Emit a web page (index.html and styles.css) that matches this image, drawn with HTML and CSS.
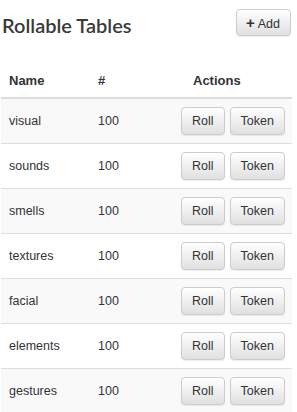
FILE: index.html
```html
<!DOCTYPE html>
<html lang="en">
<head>
	<meta charset="UTF-8">
	<title>Rollable Tables</title>
	<link rel="stylesheet" href="styles.css">
</head>
<body>
	<div class="page">
		<div class="page_head">
			<h2 class="title">Rollable Tables</h2>
			<button class="btn btn_add"><span class="plus">+</span>Add</button>
		</div>
		<table class="tbl">
			<thead>
				<tr>
					<th class="col_name">Name</th>
					<th class="col_num">#</th>
					<th class="col_act">Actions</th>
				</tr>
			</thead>
			<tbody>
				<tr><td>visual</td><td>100</td><td><div class="acts"><button class="btn">Roll</button><button class="btn">Token</button></div></td></tr>
				<tr><td>sounds</td><td>100</td><td><div class="acts"><button class="btn">Roll</button><button class="btn">Token</button></div></td></tr>
				<tr><td>smells</td><td>100</td><td><div class="acts"><button class="btn">Roll</button><button class="btn">Token</button></div></td></tr>
				<tr><td>textures</td><td>100</td><td><div class="acts"><button class="btn">Roll</button><button class="btn">Token</button></div></td></tr>
				<tr><td>facial</td><td>100</td><td><div class="acts"><button class="btn">Roll</button><button class="btn">Token</button></div></td></tr>
				<tr><td>elements</td><td>100</td><td><div class="acts"><button class="btn">Roll</button><button class="btn">Token</button></div></td></tr>
				<tr><td>gestures</td><td>100</td><td><div class="acts"><button class="btn">Roll</button><button class="btn">Token</button></div></td></tr>
			</tbody>
		</table>
	</div>
</body>
</html>
```

FILE: styles.css
```css
body{margin:0;background:#fff;color:#333;font-family:"Liberation Sans",Arial,sans-serif;font-size:12.5px;}
.page{padding:0 5px 0 1px;}
.page_head{display:flex;justify-content:space-between;align-items:flex-start;padding-top:9px;height:55px;}
.title{margin:4px 0 0 1px;font-family:Lato,"Open Sans",sans-serif;font-size:20px;font-weight:600;color:#3a3a3a;line-height:24px;}
.btn{display:inline-block;height:28px;padding:0 10px;font-family:inherit;font-size:12.5px;color:#333;background:linear-gradient(#fff,#e0e0e0);border:1px solid #ccc;border-radius:4px;box-shadow:inset 0 1px 0 rgba(255,255,255,.15),0 1px 1px rgba(0,0,0,.075);cursor:pointer;}
.btn_add{height:27px;padding:0 10px 0 9px;margin-right:1px;}
.plus{font-weight:700;font-size:15px;margin-right:3px;}
.tbl{width:100%;border-collapse:collapse;table-layout:fixed;}
.tbl th{height:33px;padding:0 8px;text-align:left;font-weight:700;font-size:13px;border-bottom:2px solid #ddd;vertical-align:middle;}
.tbl td{padding:8px;border-bottom:1px solid #ddd;vertical-align:middle;}
.tbl tbody tr:nth-child(odd){background:#f9f9f9;}
.col_name{width:73px;}
.col_num{width:67px;}
.tbl th.col_act{padding-left:20px;}
.acts{display:flex;gap:5px;}
```
